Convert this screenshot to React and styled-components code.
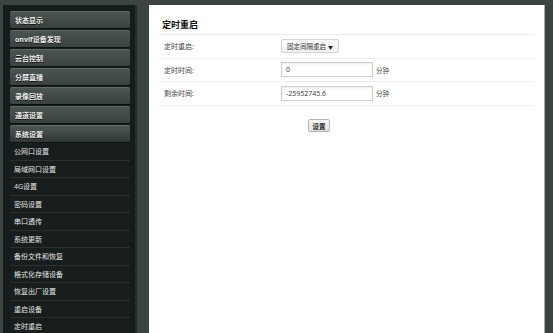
import React from "react";
import styled, { createGlobalStyle } from "styled-components";

const GlobalStyle = createGlobalStyle`
  html, body { margin: 0; padding: 0; }
  body {
    background: #3b4442;
    font-family: "Open Sans", "Noto Sans CJK SC", sans-serif;
    overflow: hidden;
  }
`;

const Page = styled.div`
  display: flex;
  align-items: flex-start;
  padding: 5px 0 0 3px;
  height: 333px;
  box-sizing: border-box;
  gap: 12px;
`;

const Sidebar = styled.nav`
  width: 134px;
  height: 340px;
  box-sizing: border-box;
  background: #161b1b;
  padding: 6px 5px 0 7px;
  display: flex;
  flex-direction: column;
  gap: 1px;
  border-right: 2px solid #252c2b;
`;

const MenuItem = styled.div`
  height: 17px;
  flex: none;
  display: flex;
  align-items: center;
  padding-left: 5px;
  border-radius: 2px;
  font-size: 7px;
  font-weight: 700;
  color: #eef0ef;
  text-shadow: 0 1px 0 #111;
  background: ${(p) =>
    p.$open
      ? "linear-gradient(#4f5856, #2f3735)"
      : "linear-gradient(#4c5553, #3a4240)"};
  box-shadow: inset 0 1px 0 rgba(255, 255, 255, 0.12);
  border-bottom: 1px solid #0f1212;
`;

const SubList = styled.div`
  display: flex;
  flex-direction: column;
  margin-top: -1px;
`;

const SubItem = styled.div`
  height: 16.5px;
  flex: none;
  display: flex;
  align-items: center;
  padding-left: 4px;
  font-size: 7px;
  color: #e4e6e5;
  background: #181d1d;
  border-bottom: 1px solid #2a302f;
`;

const Main = styled.main`
  width: 396px;
  height: 340px;
  box-sizing: border-box;
  background: #fff;
  padding: 0 10px;
  border-right: 1px solid #a9aeac;
`;

const Title = styled.h1`
  margin: 0;
  padding: 14px 0 3px 3px;
  font-size: 9px;
  line-height: 12px;
  font-weight: 700;
  color: #111;
  border-bottom: 1px solid #ececec;
`;

const Row = styled.div`
  display: flex;
  align-items: center;
  height: 22.5px;
  border-bottom: 1px solid #efefef;
`;

const Label = styled.div`
  width: 122px;
  padding-left: 5px;
  box-sizing: border-box;
  font-size: 7px;
  color: #444;
`;

const Select = styled.div`
  width: 58px;
  height: 14px;
  box-sizing: border-box;
  border: 1px solid #d4d4d4;
  border-radius: 2px;
  background: linear-gradient(#ffffff, #f1f1f1);
  display: flex;
  align-items: center;
  justify-content: space-between;
  padding: 0 5px 0 5px;
  font-size: 6.5px;
  color: #333;
`;

const Arrow = styled.span`
  font-size: 5px;
  color: #222;
`;

const Input = styled.div`
  width: 92px;
  height: 15px;
  box-sizing: border-box;
  border: 1px solid #cfcfcf;
  box-shadow: inset 0 1px 2px rgba(0, 0, 0, 0.08);
  display: flex;
  align-items: center;
  padding-left: 4px;
  font-size: 7px;
  color: #333;
`;

const Unit = styled.span`
  margin-left: 3px;
  font-size: 6.5px;
  color: #444;
`;

const ButtonRow = styled.div`
  padding: 6px 0 0 149px;
`;

const Button = styled.button`
  width: 22px;
  height: 13px;
  padding: 0;
  border: 1px solid #b5b5b5;
  border-radius: 2px;
  background: linear-gradient(#f7f7f7, #dedede);
  font-family: inherit;
  font-size: 6.5px;
  font-weight: 700;
  color: #222;
`;

const topItems = ["状态显示", "onvif设备发现", "云台控制", "分屏直播", "录像回放", "通道设置"];
const subItems = [
  "公网口设置",
  "局域网口设置",
  "4G设置",
  "密码设置",
  "串口透传",
  "系统更新",
  "备份文件和恢复",
  "格式化存储设备",
  "恢复出厂设置",
  "重启设备",
  "定时重启",
];

export default function App() {
  return (
    <>
      <GlobalStyle />
      <Page>
        <Sidebar>
          {topItems.map((t) => (
            <MenuItem key={t}>{t}</MenuItem>
          ))}
          <MenuItem $open>系统设置</MenuItem>
          <SubList>
            {subItems.map((t) => (
              <SubItem key={t}>{t}</SubItem>
            ))}
          </SubList>
        </Sidebar>
        <Main>
          <Title>定时重启</Title>
          <Row>
            <Label>定时重启:</Label>
            <Select>
              <span>固定间隔重启</span>
              <Arrow>▼</Arrow>
            </Select>
          </Row>
          <Row>
            <Label>定时时间:</Label>
            <Input>0</Input>
            <Unit>分钟</Unit>
          </Row>
          <Row>
            <Label>剩余时间:</Label>
            <Input>-25952745.6</Input>
            <Unit>分钟</Unit>
          </Row>
          <ButtonRow>
            <Button>设置</Button>
          </ButtonRow>
        </Main>
      </Page>
    </>
  );
}
